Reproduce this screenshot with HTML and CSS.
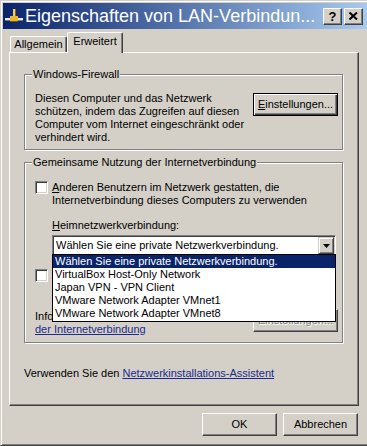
FILE: index.html
```html
<!DOCTYPE html>
<html lang="de">
<head>
    <meta charset="UTF-8">
    <title>Eigenschaften von LAN-Verbindung</title>
    <link rel="stylesheet" href="styles.css">
</head>
<body>
    <div class="window">
        <div class="titlebar">
            <svg class="title-icon" width="18" height="18" viewBox="0 0 18 18">
                <rect x="0" y="11" width="18" height="2" fill="#e8e8e8"/>
                <rect x="0" y="13" width="18" height="1" fill="#7a7a7a"/>
                <rect x="8" y="2" width="2" height="9" fill="#f0d060"/>
                <rect x="10" y="2" width="1" height="9" fill="#8a6a10"/>
                <rect x="5" y="9" width="8" height="6" fill="#e8b830"/>
                <rect x="5" y="14" width="8" height="1" fill="#7a5a00"/>
            </svg>
            <span class="title-text">Eigenschaften von LAN-Verbindun...</span>
            <div class="caption-buttons">
                <span class="cap-btn help">?</span>
                <span class="cap-btn">
                    <svg width="9" height="8" viewBox="0 0 9 8">
                        <path d="M0.5 0.5 L8 7.5 M8 0.5 L0.5 7.5" stroke="#000" stroke-width="2"/>
                    </svg>
                </span>
            </div>
        </div>

        <div class="client">
            <div class="tabs">
                <div class="tab">Allgemein</div>
                <div class="tab active">Erweitert</div>
            </div>

            <div class="panel">
                <div class="group firewall">
                    <span class="group-title">Windows-Firewall</span>
                    <div class="firewall-body">
                        <p class="desc">Diesen Computer und das Netzwerk<br>schützen, indem das Zugreifen auf diesen<br>Computer vom Internet eingeschränkt oder<br>verhindert wird.</p>
                        <button class="btn default settings"><u>E</u>instellungen...</button>
                    </div>
                </div>

                <div class="group sharing">
                    <span class="group-title">Gemeinsame Nutzung der Internetverbindung</span>
                    <div class="sharing-body">
                        <div class="check-row first">
                            <span class="check"></span>
                            <span class="check-label"><u>A</u>nderen Benutzern im Netzwerk gestatten, die<br>Internetverbindung dieses Computers zu verwenden</span>
                        </div>
                        <div class="indent">
                            <div class="home-label"><u>H</u>eimnetzwerkverbindung:</div>
                            <div class="combo">
                                <span class="combo-text">Wählen Sie eine private Netzwerkverbindung.</span>
                                <span class="combo-arrow">
                                    <svg width="7" height="4" viewBox="0 0 7 4"><path d="M0 0 H7 L3.5 4 Z" fill="#000"/></svg>
                                </span>
                                <ul class="dropdown">
                                    <li class="selected">Wählen Sie eine private Netzwerkverbindung.</li>
                                    <li>VirtualBox Host-Only Network</li>
                                    <li>Japan VPN - VPN Client</li>
                                    <li>VMware Network Adapter VMnet1</li>
                                    <li>VMware Network Adapter VMnet8</li>
                                </ul>
                            </div>
                        </div>
                        <div class="check-row second">
                            <span class="check"></span>
                            <span class="check-label">Anderen Benutzern im Netzwerk gestatten, die<br>gemeinsame Nutzung zu steuern oder zu deaktivieren</span>
                        </div>
                        <div class="info-row">
                            <p class="info">Informationen über <a href="#">gemeinsame Nutzung</a><br><a href="#">der Internetverbindung</a></p>
                            <button class="btn disabled settings" disabled>Einstellungen...</button>
                        </div>
                    </div>
                </div>

                <p class="wizard">Verwenden Sie den <a href="#">Netzwerkinstallations-Assistent</a></p>
            </div>

            <div class="dialog-buttons">
                <button class="btn">OK</button>
                <button class="btn">Abbrechen</button>
            </div>
        </div>
    </div>
</body>
</html>
```

FILE: styles.css
```css
html, body {
    margin: 0;
    padding: 0;
    overflow: hidden;
    background-color: #d4d0c8;
}

body {
    font-family: "Liberation Sans", Arial, sans-serif;
    font-size: 11px;
    line-height: 13px;
    color: #000;
}

p {
    margin: 0;
}

a {
    color: #1b2a8e;
    text-decoration: underline;
}

.window {
    width: 370px;
    height: 446px;
    box-sizing: border-box;
    padding: 2px;
    border: 1px solid;
    border-color: #d4d0c8 #404040 #404040 #d4d0c8;
    box-shadow: inset 1px 1px #fff, inset -1px -1px #808080;
    background-color: #d4d0c8;
}

/* title bar */
.titlebar {
    height: 26px;
    display: flex;
    align-items: center;
    padding: 0 4px 0 2px;
    background: linear-gradient(to right, #0a246a, #a6caf0);
    color: #fff;
}

.title-icon {
    flex: none;
}

.title-text {
    flex: 1;
    margin-left: 2px;
    font-size: 18px;
    line-height: 22px;
    white-space: nowrap;
    overflow: hidden;
}

.caption-buttons {
    display: flex;
    gap: 2px;
}

.cap-btn {
    box-sizing: border-box;
    width: 19px;
    height: 17px;
    display: flex;
    align-items: center;
    justify-content: center;
    background-color: #d4d0c8;
    border: 1px solid;
    border-color: #fff #404040 #404040 #fff;
    box-shadow: inset -1px -1px #808080;
    color: #000;
}

.cap-btn.help {
    font-weight: bold;
    font-size: 13px;
}

/* tabs */
.client {
    padding-left: 6px;
}

.tabs {
    display: flex;
    align-items: flex-end;
    height: 20px;
    margin-top: 3px;
    padding-left: 1px;
}

.tab {
    box-sizing: border-box;
    width: 57px;
    height: 16px;
    text-align: center;
    line-height: 14px;
    border: 1px solid;
    border-color: #fff #404040 transparent #fff;
    border-bottom: none;
    border-radius: 2px 2px 0 0;
    box-shadow: inset -1px 0 #808080;
}

.tab.active {
    width: 56px;
    height: 21px;
    margin-bottom: -1px;
    line-height: 17px;
    position: relative;
    z-index: 1;
    background-color: #d4d0c8;
}

.panel {
    box-sizing: border-box;
    width: 350px;
    height: 354px;
    padding: 21px 0 0 14px;
    border: 1px solid;
    border-color: #fff #404040 #404040 #fff;
    box-shadow: inset -1px -1px #808080;
}

/* group boxes */
.group {
    box-sizing: border-box;
    width: 319px;
    display: flex;
    flex-direction: column;
    border: 1px solid #808080;
    box-shadow: inset 1px 1px #fff, 1px 1px 0 #fff;
}

.group-title {
    align-self: flex-start;
    margin: -7px 0 0 7px;
    padding: 0 1px;
    background-color: #d4d0c8;
}

.firewall-body {
    display: flex;
    justify-content: space-between;
    align-items: flex-start;
    margin-top: 11px;
    padding: 0 4px 5px 10px;
}

.btn {
    box-sizing: border-box;
    height: 23px;
    width: 75px;
    padding: 0;
    font: inherit;
    color: #000;
    background-color: #d4d0c8;
    border: 1px solid;
    border-color: #fff #404040 #404040 #fff;
    box-shadow: inset -1px -1px #808080;
}

.btn.settings {
    width: 85px;
    margin-top: 1px;
}

.btn.default {
    border-color: #000;
    box-shadow: inset 1px 1px #fff, inset -1px -1px #404040, inset -2px -2px #808080;
}

.btn.disabled {
    color: #808080;
    text-shadow: 1px 1px #fff;
    margin-top: 0;
}

.group.sharing {
    margin-top: 12px;
}

.sharing-body {
    padding: 0 4px 6px 10px;
}

.check-row {
    display: flex;
    align-items: flex-start;
}

.check-row.first {
    margin-top: 12px;
}

.check-row.second {
    margin-top: 13px;
}

.check {
    flex: none;
    box-sizing: border-box;
    width: 13px;
    height: 13px;
    border: 1px solid;
    border-color: #808080 #fff #fff #808080;
    box-shadow: inset 1px 1px #404040, inset -1px -1px #d4d0c8;
    background-color: #fff;
}

.check-label {
    margin-left: 4px;
}

.indent {
    margin-left: 17px;
}

.home-label {
    margin-top: 12px;
}

/* combo box with its open list */
.combo {
    position: relative;
    box-sizing: border-box;
    width: 284px;
    height: 21px;
    margin-top: 3px;
    display: flex;
    align-items: center;
    justify-content: space-between;
    background-color: #fff;
    border: 1px solid;
    border-color: #808080 #fff #fff #808080;
    box-shadow: inset 1px 1px #404040, inset -1px -1px #d4d0c8;
    padding: 1px;
}

.combo-text {
    padding-left: 2px;
}

.combo-arrow {
    box-sizing: border-box;
    width: 16px;
    height: 17px;
    display: flex;
    align-items: center;
    justify-content: center;
    background-color: #d4d0c8;
    border: 1px solid;
    border-color: #d4d0c8 #404040 #404040 #d4d0c8;
    box-shadow: inset 1px 1px #fff, inset -1px -1px #808080;
}

.dropdown {
    position: absolute;
    left: -1px;
    right: -1px;
    top: calc(100% - 1px);
    z-index: 2;
    margin: 0;
    padding: 0 0 1px 0;
    list-style: none;
    background-color: #fff;
    border: 1px solid #000;
}

.dropdown li {
    height: 13px;
    padding-left: 2px;
    white-space: nowrap;
}

.dropdown li.selected {
    background-color: #0a246a;
    color: #fff;
}

.info-row {
    display: flex;
    justify-content: space-between;
    align-items: flex-start;
    margin-top: 14px;
}

.info {
    margin-top: 1px;
}

.wizard {
    margin-top: 24px;
}

.dialog-buttons {
    width: 350px;
    display: flex;
    justify-content: flex-end;
    gap: 6px;
    margin-top: 7px;
    padding-right: 1px;
    box-sizing: border-box;
}
```
